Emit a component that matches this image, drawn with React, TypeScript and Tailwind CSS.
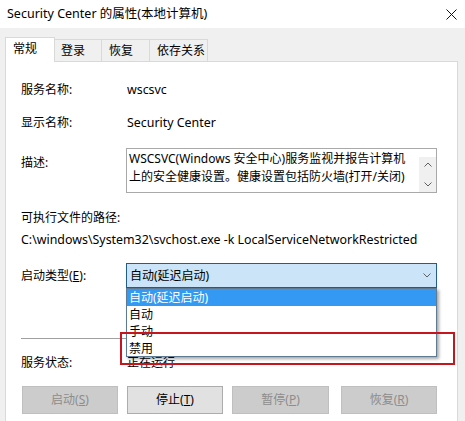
import React from 'react';

const Chevron = ({ up = false }: { up?: boolean }) => (
  <svg width="8" height="5" viewBox="0 0 8 5" className="block">
    <path
      d={up ? 'M0.5 4.5 L4 1 L7.5 4.5' : 'M0.5 0.5 L4 4 L7.5 0.5'}
      fill="none"
      stroke="#606060"
      strokeWidth="1"
    />
  </svg>
);

const Button = ({ label, hot, enabled = false, className = '' }: { label: string; hot: string; enabled?: boolean; className?: string }) => (
  <div
    className={`h-[28px] flex items-center justify-center border ${
      enabled ? 'bg-[#e1e1e1] border-[#adadad] text-black' : 'bg-[#cccccc] border-[#bfbfbf] text-[#8d8d8d]'
    } ${className}`}
  >
    {label}(<span className="underline">{hot}</span>)
  </div>
);

const App = () => {
  return (
    <div className="w-[465px] h-[421px] overflow-hidden bg-[#f0f0f0] text-[12px] leading-[16px] text-black font-['Noto_Sans','Noto_Sans_CJK_SC',sans-serif]">
      {/* title bar */}
      <div className="h-[28px] bg-white flex items-center justify-between pl-[7px] pr-[8px]">
        <span className="text-[12.5px]">Security Center 的属性(本地计算机)</span>
        <svg width="11" height="11" viewBox="0 0 11 11">
          <path d="M0.5 0.5 L10.5 10.5 M10.5 0.5 L0.5 10.5" stroke="#111" strokeWidth="1" />
        </svg>
      </div>

      {/* tabs */}
      <div className="flex items-end pl-[5px] h-[34px] relative z-10">
        <div className="w-[50px] h-[25px] bg-white border border-b-0 border-[#d9d9d9] pl-[7px] pt-[3px]">常规</div>
        <div className="w-[47px] h-[22px] border border-l-0 border-b-0 border-[#d9d9d9] pl-[6px] pt-[3px] mb-[1px]">登录</div>
        <div className="w-[48px] h-[22px] border border-l-0 border-b-0 border-[#d9d9d9] pl-[7px] pt-[3px] mb-[1px]">恢复</div>
        <div className="w-[58px] h-[22px] border border-l-0 border-b-0 border-[#d9d9d9] pl-[7px] pt-[3px] mb-[1px]">依存关系</div>
      </div>

      {/* panel */}
      <div className="ml-[5px] w-[453px] h-[400px] -mt-[1px] bg-white border border-[#d9d9d9] pl-[15px] pt-[20px]">
        <div className="flex">
          <div className="w-[106px]">服务名称:</div>
          <div className="text-[12.4px]">wscsvc</div>
        </div>
        <div className="flex mt-[17px]">
          <div className="w-[106px]">显示名称:</div>
          <div className="text-[12.4px]">Security Center</div>
        </div>
        <div className="flex mt-[17px]">
          <div className="w-[105px] mt-[7px]">描述:</div>
          <div className="w-[311px] h-[45px] border border-[#a9a9a9] flex">
            <div className="flex-1 pl-[2px] pt-[1px] leading-[18px] whitespace-nowrap overflow-hidden">
              <div>WSCSVC(Windows 安全中心)服务监视并报告计算机</div>
              <div>上的安全健康设置。健康设置包括防火墙(打开/关闭)</div>
            </div>
            <div className="w-[17px] bg-[#f0f0f0] mt-[8px] flex flex-col items-center justify-between pt-[5px] pb-[5px]">
              <Chevron up />
              <Chevron />
            </div>
          </div>
        </div>
        <div className="mt-[17px]">可执行文件的路径:</div>
        <div className="mt-[6px] whitespace-nowrap text-[12.4px]">C:\windows\System32\svchost.exe -k LocalServiceNetworkRestricted</div>

        <div className="flex items-center mt-[15px]">
          <div className="w-[105px]">
            启动类型(<span className="underline">E</span>):
          </div>
          <div className="relative w-[311px] h-[25px]">
            <div className="h-full bg-[#cce4f7] border border-[#1f5e8f] flex items-center justify-between pl-[3px] pr-[5px]">
              <span>自动(延迟启动)</span>
              <Chevron />
            </div>
            {/* dropdown list */}
            <div className="absolute left-0 top-[25px] w-[311px] h-[69px] bg-white border border-[#5f7b93] shadow-[2px_2px_3px_rgba(0,0,0,0.35)] z-20">
              <div className="h-[17px] bg-[#3399f3] text-white pl-[2px] leading-[17px]">自动(延迟启动)</div>
              <div className="h-[17px] pl-[2px] leading-[17px]">自动</div>
              <div className="h-[17px] pl-[2px] leading-[17px]">手动</div>
              <div className="h-[17px] pl-[2px] leading-[17px]">禁用</div>
            </div>
            {/* red highlight */}
            <div className="absolute left-[-6px] top-[69px] w-[335px] h-[33px] border-2 border-[#c4161c] z-30" />
          </div>
        </div>

        <div className="mt-[50px] w-[416px] h-px bg-[#a0a0a0]" />

        <div className="flex mt-[16px]">
          <div className="w-[106px]">服务状态:</div>
          <div>正在运行</div>
        </div>

        <div className="flex mt-[15px]">
          <Button label="启动" hot="S" className="w-[96px] ml-[1px]" />
          <Button label="停止" hot="T" enabled className="w-[96px] ml-[9px]" />
          <Button label="暂停" hot="P" className="w-[97px] ml-[9px]" />
          <Button label="恢复" hot="R" className="w-[96px] ml-[12px]" />
        </div>
      </div>
    </div>
  );
};

export default App;
